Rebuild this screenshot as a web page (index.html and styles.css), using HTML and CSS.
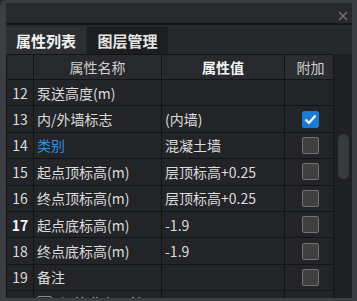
FILE: index.html
```html
<!DOCTYPE html>
<html lang="zh-CN">
<head>
    <meta charset="UTF-8">
    <title>属性列表</title>
    <link rel="stylesheet" href="styles.css">
</head>
<body>
    <div class="frame">
        <div class="titlebar">
            <svg class="close" width="10" height="10" viewBox="0 0 10 10">
                <path d="M1 1L9 9M9 1L1 9" stroke="#6d6e70" stroke-width="1.6"/>
            </svg>
        </div>
        <div class="tabs">
            <div class="tab active">属性列表</div>
            <div class="tab">图层管理</div>
        </div>
        <div class="panel">
            <div class="table-wrap">
                <table class="props">
                    <thead>
                        <tr>
                            <th class="num"></th>
                            <th class="name">属性名称</th>
                            <th class="value">属性值</th>
                            <th class="add">附加</th>
                        </tr>
                    </thead>
                    <tbody>
                        <tr>
                            <td class="num">12</td>
                            <td>泵送高度(m)</td>
                            <td></td>
                            <td class="add"></td>
                        </tr>
                        <tr>
                            <td class="num">13</td>
                            <td>内/外墙标志</td>
                            <td>(内墙)</td>
                            <td class="add"><span class="check on"><svg width="13" height="11" viewBox="0 0 13 11"><path d="M1.5 5.5L5 9L11.5 1.5" fill="none" stroke="#fff" stroke-width="2.2"/></svg></span></td>
                        </tr>
                        <tr>
                            <td class="num">14</td>
                            <td class="link">类别</td>
                            <td>混凝土墙</td>
                            <td class="add"><span class="check"></span></td>
                        </tr>
                        <tr>
                            <td class="num">15</td>
                            <td>起点顶标高(m)</td>
                            <td>层顶标高+0.25</td>
                            <td class="add"><span class="check"></span></td>
                        </tr>
                        <tr>
                            <td class="num">16</td>
                            <td>终点顶标高(m)</td>
                            <td>层顶标高+0.25</td>
                            <td class="add"><span class="check"></span></td>
                        </tr>
                        <tr>
                            <td class="num bold">17</td>
                            <td>起点底标高(m)</td>
                            <td>-1.9</td>
                            <td class="add"><span class="check"></span></td>
                        </tr>
                        <tr>
                            <td class="num">18</td>
                            <td>终点底标高(m)</td>
                            <td>-1.9</td>
                            <td class="add"><span class="check"></span></td>
                        </tr>
                        <tr>
                            <td class="num">19</td>
                            <td>备注</td>
                            <td></td>
                            <td class="add"><span class="check"></span></td>
                        </tr>
                        <tr>
                            <td class="num">20</td>
                            <td><span class="group"><span class="toggle"></span>钢筋业务属性</span></td>
                            <td></td>
                            <td class="add"></td>
                        </tr>
                    </tbody>
                </table>
            </div>
            <div class="scrollbar">
                <div class="thumb"></div>
            </div>
        </div>
    </div>
</body>
</html>
```

FILE: styles.css
```css
body {
    margin: 0;
    background: #26272a;
    font-family: "Noto Sans CJK SC", "Noto Sans", sans-serif;
    color: #dcdcdc;
}
.frame {
    width: 357px;
    height: 301px;
    box-sizing: border-box;
    padding: 3px 5px 3px 6px;
    background: #3b3e43;
    border-top-left-radius: 6px;
    display: flex;
    flex-direction: column;
}
.titlebar {
    height: 18px;
    flex-shrink: 0;
    background: #28292c;
    border-bottom: 2px solid #141517;
    display: flex;
    justify-content: flex-end;
    align-items: flex-end;
    padding: 0 4px 2px 0;
    box-sizing: content-box;
}
.close {
    display: block;
}
.tabs {
    height: 29px;
    flex-shrink: 0;
    background: #27282b;
    display: flex;
    align-items: flex-end;
}
.tab {
    width: 81px;
    height: 27px;
    line-height: 27px;
    text-align: center;
    font-size: 15px;
    font-weight: bold;
    color: #e4e4e4;
    background: #1d1e20;
}
.tab.active {
    width: 80px;
    margin-right: 1px;
    background: #2d2e31;
    color: #f2f2f2;
}
.panel {
    flex-grow: 1;
    display: flex;
    overflow: hidden;
    background: #1f2022;
}
.table-wrap {
    width: 327px;
    overflow: hidden;
}
.props {
    width: 328px;
    border-collapse: collapse;
    table-layout: fixed;
    font-size: 14px;
}
.props th, .props td {
    border: 1px solid #131415;
    padding: 0 0 0 3px;
    white-space: nowrap;
    overflow: hidden;
    text-align: left;
}
.props th {
    height: 24px;
    background: #28292c;
    font-weight: normal;
    text-align: center;
    color: #cfcfcf;
    padding: 0;
}
.props th.value {
    font-weight: bold;
    color: #f4f4f4;
}
.props th.add {
    background: #2c2d30;
}
.props tbody tr {
    height: 26.4px;
}
.props td {
    background: #232427;
}
.props th.num, .props td.num {
    width: 26px;
    text-align: center;
    padding: 0;
}
.props th.name {
    width: 127px;
}
.props th.value {
    width: 122px;
}
.props th.add {
    width: 51px;
}
.props td.add {
    text-align: center;
    padding: 0;
    line-height: 0;
}
.props td.bold {
    font-weight: bold;
    color: #f4f4f4;
}
.props td.link {
    color: #2e8fe3;
}
.check {
    display: inline-block;
    width: 17px;
    height: 17px;
    box-sizing: border-box;
    border: 1.5px solid #727272;
    border-radius: 2px;
    background: #404041;
    vertical-align: middle;
}
.check.on {
    background: #1b7ad3;
    border-color: #1b7ad3;
    display: inline-flex;
    align-items: center;
    justify-content: center;
}
.group {
    display: inline-flex;
    align-items: center;
    gap: 8px;
}
.toggle {
    width: 15px;
    height: 15px;
    box-sizing: border-box;
    border: 1.5px solid #8a8a8a;
    border-radius: 2px;
}
.scrollbar {
    flex-grow: 1;
    background: #1f2022;
    border-left: 1px solid #131415;
    padding: 80px 3px 0 4px;
}
.thumb {
    height: 45px;
    border-radius: 6px;
    background: #393a3d;
}
```
